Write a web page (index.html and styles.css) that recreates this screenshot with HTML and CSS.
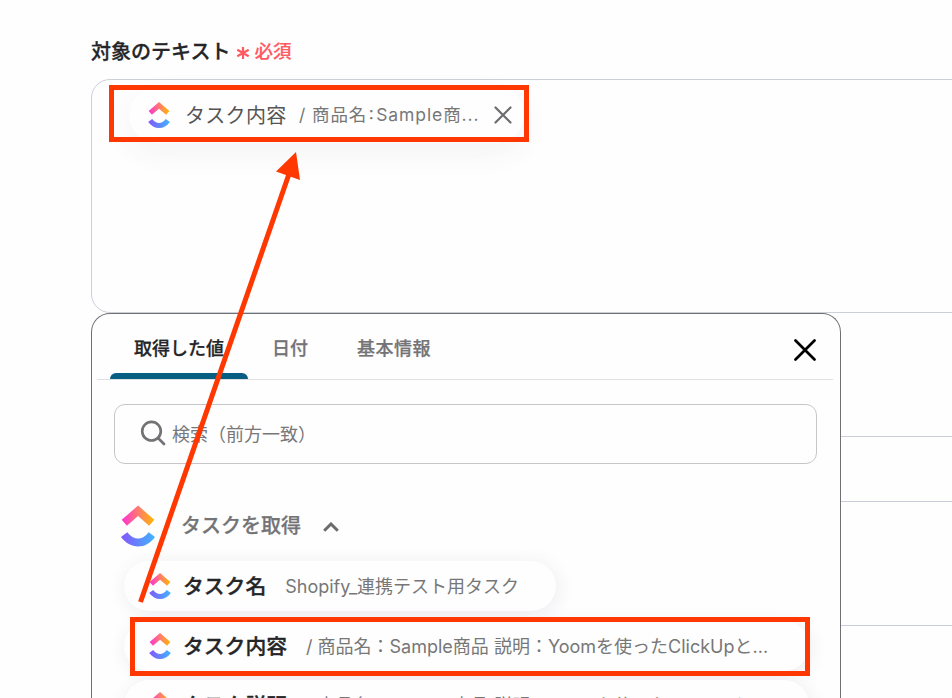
FILE: index.html
```html
<!DOCTYPE html>
<html lang="ja">
<head>
    <meta charset="UTF-8">
    <meta name="viewport" content="width=device-width, initial-scale=1.0">
    <title>対象のテキスト</title>
    <link rel="stylesheet" href="styles.css">
</head>
<body>
    <svg class="defs" width="0" height="0">
        <defs>
            <linearGradient id="logo-top" x1="0" y1="0.6" x2="1" y2="0.6">
                <stop offset="0" stop-color="#ff2fd9"/>
                <stop offset="0.5" stop-color="#ff7a70"/>
                <stop offset="1" stop-color="#ffb800"/>
            </linearGradient>
            <linearGradient id="logo-bottom" x1="0" y1="0" x2="1" y2="0">
                <stop offset="0" stop-color="#8456fb"/>
                <stop offset="1" stop-color="#40b5ff"/>
            </linearGradient>
            <symbol id="logo" viewBox="2 0 20 24">
                <path fill="url(#logo-bottom)" d="M2 18.44l3.69-2.83c1.96 2.56 4.04 3.74 6.36 3.74 2.31 0 4.33-1.17 6.2-3.7L22 18.4C19.3 22.07 15.94 24 12.05 24 8.18 24 4.79 22.08 2 18.44z"/>
                <path fill="url(#logo-top)" d="M12.04 6.15l-6.57 5.66-3.03-3.52L12.05 0l9.55 8.3-3.05 3.5z"/>
            </symbol>
        </defs>
    </svg>

    <main class="form">
        <div class="label">
            <span class="label-text">対象のテキスト</span>
            <svg class="asterisk" width="14" height="14" viewBox="0 0 14 14"><path d="M7 1v12M1.3 3.8l11.4 6.4M12.7 3.8L1.3 10.2"/></svg>
            <span class="required">必須</span>
        </div>

        <div class="field">
            <div class="chip">
                <svg class="logo"><use href="#logo"/></svg>
                <span class="chip-name">タスク内容</span>
                <span class="chip-value">/ 商品名<span class="colon">:</span>Sample商...</span>
                <svg class="chip-close" width="18" height="18" viewBox="0 0 18 18"><path d="M1.5 1.5l15 15M16.5 1.5l-15 15"/></svg>
            </div>
        </div>
        <div class="field-small"></div>
        <div class="field-next"></div>
    </main>

    <section class="picker">
        <div class="tabs">
            <div class="tab active">取得した値</div>
            <div class="tab date">日付</div>
            <div class="tab basic">基本情報</div>
            <svg class="close" width="22" height="22" viewBox="0 0 22 22"><path d="M1.5 1.5l19 19M20.5 1.5l-19 19"/></svg>
        </div>

        <div class="search">
            <svg width="26" height="26" viewBox="0 0 26 26"><circle cx="11.5" cy="11.2" r="9.3"/><path d="M18 18l6 6"/></svg>
            <span>検索（前方一致）</span>
        </div>

        <div class="group">
            <svg class="logo-large"><use href="#logo"/></svg>
            <span>タスクを取得</span>
            <svg class="chevron" width="16" height="10" viewBox="0 0 16 10"><path d="M1.2 8.8L8 2l6.8 6.8"/></svg>
        </div>

        <div class="items">
            <div class="item item-short">
                <svg class="logo"><use href="#logo"/></svg>
                <span class="item-name">タスク名</span>
                <span class="item-value">Shopify_連携テスト用タスク</span>
            </div>
            <div class="item">
                <svg class="logo"><use href="#logo"/></svg>
                <span class="item-name">タスク内容</span>
                <span class="item-value">/ 商品名：Sample商品 説明：Yoomを使ったClickUpと...</span>
            </div>
            <div class="item">
                <svg class="logo"><use href="#logo"/></svg>
                <span class="item-name">タスク説明</span>
                <span class="item-value">/ 商品名：Sample商品 説明：Yoomを使ったClickUpと...</span>
            </div>
        </div>
    </section>

    <!-- highlight frames and arrow drawn over the form -->
    <svg class="notes" width="952" height="698" viewBox="0 0 952 698">
        <rect x="111.5" y="87.5" width="415" height="52"/>
        <rect x="132.5" y="619.5" width="675" height="54"/>
        <path d="M140.5 602L289 174"/>
        <polygon points="296,152 276,171.5 300,180"/>
    </svg>
</body>
</html>
```

FILE: styles.css
```css
* { box-sizing: border-box; }
body {
    margin: 0;
    width: 952px;
    height: 698px;
    overflow: hidden;
    position: relative;
    background: #fefefe;
    font-family: Inter, "Noto Sans CJK JP", sans-serif;
    color: #252528;
}
svg { display: block; flex: none; fill: none; }
span, .tab { white-space: nowrap; }
.defs { position: absolute; }

.form { padding: 35px 0 0 91px; height: 698px; overflow: hidden; }
.label { display: flex; align-items: center; height: 30px; margin-bottom: 14px; }
.label-text { font-size: 20px; font-weight: 500; -webkit-text-stroke: 0.3px; }
.asterisk { stroke: #ff5962; stroke-width: 2.2; margin: 6px 4px 0 6px; }
.required { color: #ff5962; font-size: 18.5px; font-weight: 500; -webkit-text-stroke: 0.2px; }

.field {
    width: 900px;
    height: 234px;
    border: 1px solid #ccd0d9;
    border-radius: 19px;
    padding: 7px 0 0 37px;
}
.chip {
    display: flex;
    align-items: center;
    width: 395px;
    height: 56px;
    padding-left: 19px;
    border-radius: 28px;
    background: #fefefe;
    box-shadow: 0 10px 30px rgba(90, 70, 110, 0.06);
}
.logo { width: 22px; height: 26px; }
.chip-name { font-size: 20px; color: #555; margin-left: 15px; width: 114px; letter-spacing: 0.3px; padding-bottom: 2px; }
.chip-value { font-size: 17.5px; color: #777; letter-spacing: 0.9px; width: 195px; padding-bottom: 3px; }
.colon { margin: 0 1.5px; font-feature-settings: "case"; }
.chip-close { stroke: #6d6d70; stroke-width: 2.2; stroke-linecap: round; }
.field-small { width: 900px; height: 66px; margin-top: 123px; border: 1px solid #c9cdd9; }
.field-next { width: 900px; height: 73px; margin-top: 123px; border: 1px solid #c9cdd9; border-bottom: none; }

.picker {
    position: absolute;
    left: 91px;
    top: 313px;
    width: 750px;
    height: 385px;
    overflow: hidden;
    background: #fefefe;
    border: 1px solid #707073;
    border-bottom: none;
    border-radius: 19px 19px 0 0;
}
.tabs {
    display: flex;
    height: 66px;
    margin: 0 7px 0 5px;
    padding-left: 13px;
    border-bottom: 1px solid #e0e0e2;
}
.tab { font-size: 18px; font-weight: 500; line-height: 70px; height: 65px; color: #747476; -webkit-text-stroke: 0.25px; }
.tab.active { width: 138px; padding-left: 24px; color: #252528; position: relative; }
.tab.active::after {
    content: "";
    position: absolute;
    left: 0;
    bottom: 0;
    width: 138px;
    height: 6px;
    border-radius: 6px 6px 0 0;
    background: #065f83;
}
.date { margin-left: 24px; width: 85px; }
.basic { letter-spacing: 0.5px; }
.close { margin: 25px 17px 0 auto; stroke: #000; stroke-width: 2.7; stroke-linecap: round; }

.search {
    display: flex;
    align-items: center;
    width: 703px;
    height: 60px;
    margin: 24px 0 0 22px;
    padding: 0 0 2px 25px;
    border: 1px solid #c6c6c8;
    border-radius: 11px;
    font-size: 18px;
    color: #77777a;
}
.search svg { stroke: #737376; stroke-width: 2.7; stroke-linecap: round; margin-right: 6px; }

.group { display: flex; align-items: center; height: 42px; margin: 41px 0 0 29px; }
.logo-large { width: 34px; height: 42px; }
.group span { font-size: 20px; font-weight: 500; color: #747476; margin: 0 22px 0 26px; padding-bottom: 4px; -webkit-text-stroke: 0.25px; }
.chevron { stroke: #6b6b6e; stroke-width: 3; margin-top: 1px; }

.items { margin: 14px 0 0 32px; }
.item {
    display: flex;
    align-items: center;
    width: 685px;
    height: 50px;
    margin-bottom: 9px;
    padding-left: 25px;
    border-radius: 25px;
    background: #fefefe;
    box-shadow: 2px 3px 18px rgba(90, 70, 110, 0.1);
}
.item-short { width: 432px; margin-bottom: 10px; }
.item-name { font-size: 20.8px; font-weight: 500; margin: 0 19px 0 12px; padding-bottom: 2px; -webkit-text-stroke: 0.35px; }
.item-value { font-size: 18px; color: #777; padding-bottom: 2px; }

.notes { position: absolute; left: 0; top: 0; }
.notes rect, .notes path { stroke: #ff3700; stroke-width: 5; }
.notes polygon { fill: #ff3700; }
```
